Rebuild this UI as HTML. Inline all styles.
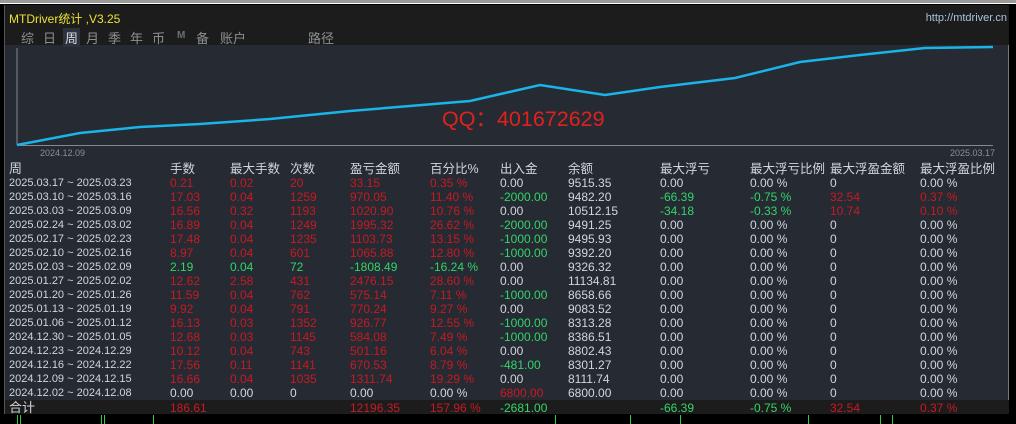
<!DOCTYPE html>
<html><head><meta charset="utf-8"><style>
*{margin:0;padding:0;box-sizing:border-box}
body{width:1016px;height:424px;background:#000;position:relative;overflow:hidden;font-family:"Liberation Sans","Noto Sans CJK SC",sans-serif;font-size:12px;color:#d2d6dc}
#top{position:absolute;left:0;top:0;width:1016px;height:4px;background:#9a9a9a;border-bottom:1px solid #fff}
#panel{position:absolute;left:5px;top:5px;width:1004px;height:409px;background:#252a33;border-right:1px solid #777;border-bottom:1px solid #777}
#title{position:absolute;left:0;top:0;width:1004px;height:40px;background:#1c1c1c}
.t{position:absolute;white-space:nowrap}
.tab{position:absolute;top:23px;font-size:13px;color:#8c8f94}
.row{position:absolute;left:0;height:14px;line-height:14px;white-space:nowrap}
.row span{position:absolute;top:0}
.r{color:#c81a22}.g{color:#34d46a}
.d{font-size:11px}
</style></head><body>
<div id="top"></div>
<div id="panel">
<div id="title">
<div class="t" style="left:4px;top:5px;color:#f0e030;font-size:12px">MTDriver统计 ,V3.25</div>
<div class="t" style="right:2px;top:7px;color:#a8c4e0;font-size:11px">http://mtdriver.cn</div>
<div class="tab" style="left:16px">综</div>
<div class="tab" style="left:38px">日</div>
<div class="tab" style="left:58px;background:#2c333d;color:#d8dde4;padding:0 2px">周</div>
<div class="tab" style="left:81px">月</div>
<div class="tab" style="left:103px">季</div>
<div class="tab" style="left:125px">年</div>
<div class="tab" style="left:147px">币</div>
<div class="tab" style="left:172px;font-size:10px;top:25px;color:#6c6f74;font-weight:bold">M</div>
<div class="tab" style="left:191px">备</div>
<div class="tab" style="left:215px">账户</div>
<div class="tab" style="left:303px">路径</div>
</div>
<svg style="position:absolute;left:0;top:0" width="1004" height="409">
<line x1="12" y1="43" x2="12" y2="140" stroke="#888" stroke-width="1"/>
<line x1="12" y1="140.5" x2="988" y2="140.5" stroke="#888" stroke-width="1"/>
<polyline fill="none" stroke="#1ab4e8" stroke-width="2.5" points="12,140 75,128 135,122 195,119 265,114 345,106 465,96 535,80 600,90 655,82 730,73 795,57 855,50 920,43 988,42"/>
<text x="35" y="151" fill="#8c9098" font-size="9" font-family="Liberation Sans">2024.12.09</text>
<text x="945" y="151" fill="#8c9098" font-size="9" font-family="Liberation Sans">2025.03.17</text>
<text x="437" y="121" fill="#e0221c" font-size="21.5" font-family="Liberation Sans,Noto Sans CJK SC,sans-serif">QQ：401672629</text>
</svg>
<div class="row" style="top:157px;font-size:12.5px;height:16px"><span style="left:4px;font-size:13px">周</span><span style="left:165px">手数</span><span style="left:225px">最大手数</span><span style="left:285px">次数</span><span style="left:345px">盈亏金额</span><span style="left:425px">百分比%</span><span style="left:495px">出入金</span><span style="left:563px">余额</span><span style="left:655px">最大浮亏</span><span style="left:745px">最大浮亏比例</span><span style="left:825px">最大浮盈金额</span><span style="left:915px">最大浮盈比例</span></div>
<div id="rows"></div>
<div style="position:absolute;left:0;top:395px;width:1004px;height:14px;background:#1c1c1c"></div>
<div class="row" style="top:396px"><span style="left:4px;font-size:13px">合计</span><span class="r" style="left:165px">186.61</span><span class="r" style="left:345px">12196.35</span><span class="r" style="left:425px">157.96 %</span><span class="g" style="left:495px">-2681.00</span><span class="g" style="left:655px">-66.39</span><span class="g" style="left:745px">-0.75 %</span><span class="r" style="left:825px">32.54</span><span class="r" style="left:915px">0.37 %</span></div>
</div>
<div style="position:absolute;left:0;top:415px;width:1016px;height:9px">
<div style="position:absolute;left:17px;top:0;width:1px;height:9px;background:#2ecc40"></div><div style="position:absolute;left:20px;top:0;width:1px;height:9px;background:#2ecc40"></div>
<div style="position:absolute;left:101px;top:0;width:1px;height:9px;background:#2ecc40"></div><div style="position:absolute;left:104px;top:0;width:1px;height:9px;background:#2ecc40"></div>
<div style="position:absolute;left:153px;top:0;width:1px;height:9px;background:#2ecc40"></div>
<div style="position:absolute;left:555px;top:0;width:1px;height:9px;background:#2ecc40"></div>
<div style="position:absolute;left:630px;top:0;width:1px;height:9px;background:#2ecc40"></div>
<div style="position:absolute;left:680px;top:0;width:1px;height:9px;background:#2ecc40"></div>
<div style="position:absolute;left:808px;top:0;width:1px;height:9px;background:#2ecc40"></div>
<div style="position:absolute;left:880px;top:0;width:1px;height:9px;background:#2ecc40"></div>
<div style="position:absolute;left:892px;top:0;width:1px;height:9px;background:#2ecc40"></div>
</div>
<div style="position:absolute;left:0;top:5px;width:5px;height:409px;background:#000;border-right:1px solid #555"></div>
<script>
var R=[
["2025.03.17 ~ 2025.03.23","r0.21","r0.02","r20","r33.15","r0.35 %","0.00","9515.35","0.00","0.00 %","0","0.00 %"],
["2025.03.10 ~ 2025.03.16","r17.03","r0.04","r1259","r970.05","r11.40 %","g-2000.00","9482.20","g-66.39","g-0.75 %","r32.54","r0.37 %"],
["2025.03.03 ~ 2025.03.09","r16.56","r0.32","r1193","r1020.90","r10.76 %","0.00","10512.15","g-34.18","g-0.33 %","r10.74","r0.10 %"],
["2025.02.24 ~ 2025.03.02","r16.89","r0.04","r1249","r1995.32","r26.62 %","g-2000.00","9491.25","0.00","0.00 %","0","0.00 %"],
["2025.02.17 ~ 2025.02.23","r17.48","r0.04","r1235","r1103.73","r13.15 %","g-1000.00","9495.93","0.00","0.00 %","0","0.00 %"],
["2025.02.10 ~ 2025.02.16","r8.97","r0.04","r601","r1065.88","r12.80 %","g-1000.00","9392.20","0.00","0.00 %","0","0.00 %"],
["2025.02.03 ~ 2025.02.09","g2.19","g0.04","g72","g-1808.49","g-16.24 %","0.00","9326.32","0.00","0.00 %","0","0.00 %"],
["2025.01.27 ~ 2025.02.02","r12.62","r2.58","r431","r2476.15","r28.60 %","0.00","11134.81","0.00","0.00 %","0","0.00 %"],
["2025.01.20 ~ 2025.01.26","r11.59","r0.04","r762","r575.14","r7.11 %","g-1000.00","8658.66","0.00","0.00 %","0","0.00 %"],
["2025.01.13 ~ 2025.01.19","r9.92","r0.04","r791","r770.24","r9.27 %","0.00","9083.52","0.00","0.00 %","0","0.00 %"],
["2025.01.06 ~ 2025.01.12","r16.13","r0.03","r1352","r926.77","r12.55 %","g-1000.00","8313.28","0.00","0.00 %","0","0.00 %"],
["2024.12.30 ~ 2025.01.05","r12.68","r0.03","r1145","r584.08","r7.49 %","g-1000.00","8386.51","0.00","0.00 %","0","0.00 %"],
["2024.12.23 ~ 2024.12.29","r10.12","r0.04","r743","r501.16","r6.04 %","0.00","8802.43","0.00","0.00 %","0","0.00 %"],
["2024.12.16 ~ 2024.12.22","r17.56","r0.11","r1141","r670.53","r8.79 %","g-481.00","8301.27","0.00","0.00 %","0","0.00 %"],
["2024.12.09 ~ 2024.12.15","r16.66","r0.04","r1035","r1311.74","r19.29 %","0.00","8111.74","0.00","0.00 %","0","0.00 %"],
["2024.12.02 ~ 2024.12.08","0.00","0.00","0","0.00","0.00 %","r6800.00","6800.00","0.00","0.00 %","0","0.00 %"]];
var X=[4,165,225,285,345,425,495,563,655,745,825,915],h="";
R.forEach(function(r,i){h+='<div class="row" style="top:'+(171+i*14)+'px">';r.forEach(function(c,j){var cl=j==0?"d":"";if(j>0&&(c[0]=="r"||c[0]=="g")){cl=c[0];c=c.slice(1)}h+='<span class="'+cl+'" style="left:'+X[j]+'px">'+c+'</span>'});h+='</div>'});
document.getElementById("rows").outerHTML=h;
</script>
</body></html>
